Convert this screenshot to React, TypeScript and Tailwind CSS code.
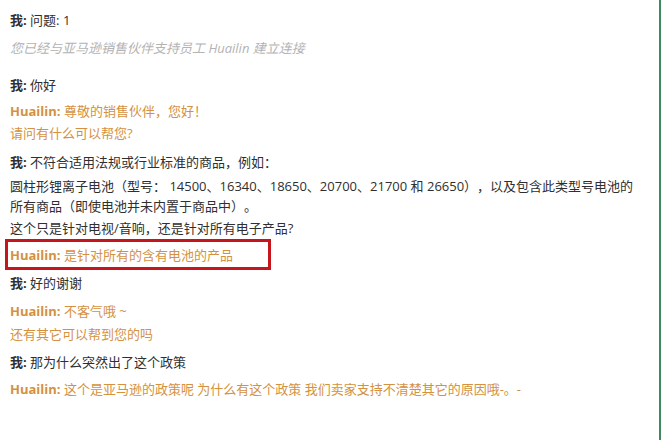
const me = "text-[#2f2f2f]";
const agent = "text-[#d4913f]";

function Me({ children }: { children: React.ReactNode }) {
  return (
    <>
      <span className="font-bold">我:</span> {children}
    </>
  );
}

function Agent({ children }: { children: React.ReactNode }) {
  return (
    <>
      <span className="font-bold">Huailin:</span> {children}
    </>
  );
}

export default function App() {
  return (
    <div
      className="w-[661px] h-[440px] bg-white border-r-2 border-[#3f8a5c] overflow-hidden text-[13px] leading-[20px] [text-spacing-trim:space-all]"
      style={{ fontFamily: '"Open Sans", "Noto Sans CJK SC", sans-serif' }}
    >
      <div className="flex flex-col pl-[10px] pt-[10px]">
        <div className={me}>
          <Me>问题: 1</Me>
        </div>
        <div className="mt-[8px] italic text-[#b3b3b3]">
          您已经与亚马逊销售伙伴支持员工 Huailin 建立连接
        </div>

        <div className={`mt-[17px] ${me}`}>
          <Me>你好</Me>
        </div>
        <div className={`mt-[6px] ${agent}`}>
          <Agent>尊敬的销售伙伴，您好！</Agent>
        </div>
        <div className={`mt-[2px] ${agent}`}>请问有什么可以帮您?</div>

        <div className={`mt-[9px] ${me}`}>
          <Me>不符合适用法规或行业标准的商品，例如：</Me>
        </div>
        <div className={`mt-[4px] ${me}`}>
          圆柱形锂离子电池（型号： 14500、16340、18650、20700、21700 和 26650），以及包含此类型号电池的
          <br />
          所有商品（即使电池并未内置于商品中）。
        </div>
        <div className={`mt-[2px] ${me}`}>这个只是针对电视/音响，还是针对所有电子产品?</div>

        <div className="-ml-[5px] mt-[1px] w-[266px] h-[31px] border-[3px] border-[#c4161c] pl-[2px] pt-[3px]">
          <div className={agent}>
            <Agent>是针对所有的含有电池的产品</Agent>
          </div>
        </div>

        <div className={`mt-[3px] ${me}`}>
          <Me>好的谢谢</Me>
        </div>
        <div className={`mt-[8px] ${agent}`}>
          <Agent>不客气哦 ~</Agent>
        </div>
        <div className={`mt-[3px] ${agent}`}>还有其它可以帮到您的吗</div>

        <div className={`mt-[8px] ${me}`}>
          <Me>那为什么突然出了这个政策</Me>
        </div>
        <div className={`mt-[7px] ${agent}`}>
          <Agent>这个是亚马逊的政策呢 为什么有这个政策 我们卖家支持不清楚其它的原因哦-。-</Agent>
        </div>
      </div>
    </div>
  );
}
